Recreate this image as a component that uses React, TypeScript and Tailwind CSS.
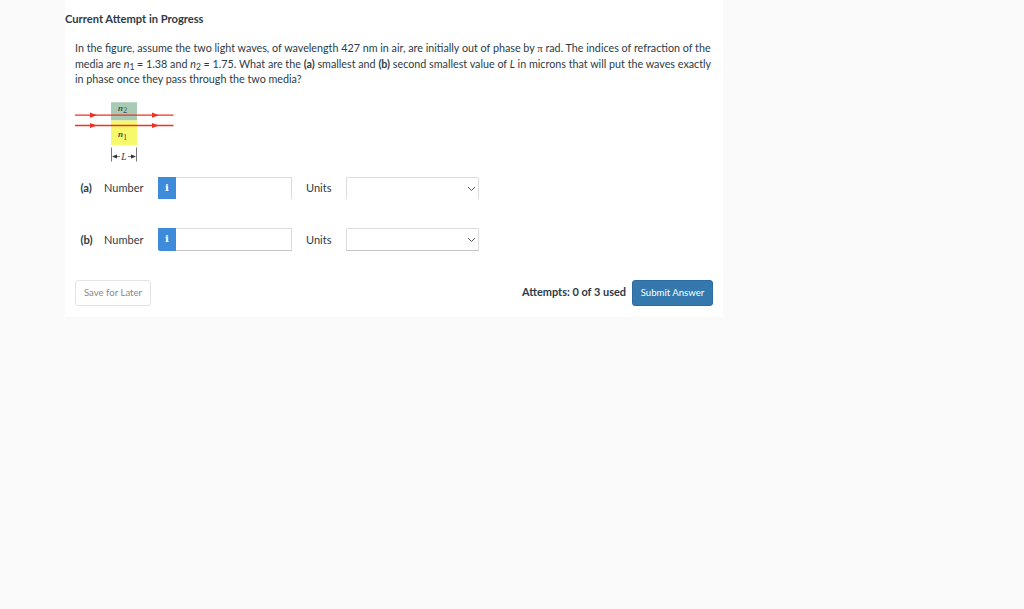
import { useState } from 'react';

interface AnswerRowProps {
  part: string;
  open?: boolean;
}

function LightWaveFigure() {
  return (
    <svg width="110" height="66" viewBox="0 0 110 66" className="block">
      <rect x="36" y="2.2" width="26" height="18.3" fill="#a9cbb5" />
      <rect x="36" y="20.5" width="26" height="24.8" fill="#f8f86c" />
      <g stroke="#ee3124" strokeWidth="1.3">
        <line x1="0" y1="15.2" x2="98.5" y2="15.2" />
        <line x1="0" y1="25.5" x2="98.5" y2="25.5" />
      </g>
      <g fill="#ee3124">
        <path d="M15 12.6 L22 15.2 L15 17.8 Z" />
        <path d="M77 12.6 L84 15.2 L77 17.8 Z" />
        <path d="M15 22.9 L22 25.5 L15 28.1 Z" />
        <path d="M77 22.9 L84 25.5 L77 28.1 Z" />
      </g>
      <g fill="#4b5148" fontFamily="'Liberation Serif', serif">
        <text x="43" y="10.6" fontSize="9" fontStyle="italic" fontWeight="bold">n</text>
        <text x="48" y="12.8" fontSize="8.5">2</text>
        <text x="43" y="37" fontSize="9" fontStyle="italic" fontWeight="bold">n</text>
        <text x="48" y="39.6" fontSize="8.5">1</text>
      </g>
      <g stroke="#555" strokeWidth="0.8">
        <line x1="36.5" y1="47.5" x2="36.5" y2="61.5" />
        <line x1="61.5" y1="47.5" x2="61.5" y2="61.5" />
        <line x1="38" y1="56.6" x2="45" y2="56.6" />
        <line x1="53" y1="56.6" x2="60" y2="56.6" />
      </g>
      <path d="M37 56.6 L42 54.6 V58.6 Z" fill="#333" />
      <path d="M61 56.6 L56 54.6 V58.6 Z" fill="#333" />
      <text x="46.3" y="59.8" fontSize="9.5" fontStyle="italic" fill="#333" fontFamily="'Liberation Serif', serif">L</text>
    </svg>
  );
}

function AnswerRow({ part, open }: AnswerRowProps) {
  const [value, setValue] = useState('');
  const edge = open ? 'h-[22px] border-b-0' : 'h-[23px] border-b-[#c4c4c4]';

  return (
    <div className={`flex h-[23px] items-start pl-[5.5px] ${open ? 'leading-[22px]' : 'leading-[23px]'}`}>
      <span className="w-[23.5px] text-[11.2px] font-bold">{part}</span>
      <span className="w-[54px]">Number</span>
      <span className={`w-[18px] bg-[#3f8bdb] text-center text-[10px] font-bold leading-[21px] text-white ${open ? 'h-[22px]' : 'h-[23px] rounded-bl-xs'}`}>
        <span className="font-['DejaVu_Serif',serif]">i</span>
      </span>
      <input
        value={value}
        onChange={(e) => setValue(e.target.value)}
        className={`w-[116px] border border-l-0 border-[#dcdcdc] bg-white px-2 outline-none ${edge}`}
      />
      <span className="ml-[14px] w-10">Units</span>
      <div className={`flex w-[133px] items-center justify-end rounded-t-xs border border-[#dcdcdc] bg-white pr-[2px] ${edge}`}>
        <svg width="9" height="6" viewBox="0 0 9 6" fill="none" stroke="#555" strokeWidth="1">
          <path d="M1 1 L4.5 4.5 L8 1" />
        </svg>
      </div>
    </div>
  );
}

export default function App() {
  return (
    <div className="min-h-screen bg-[#fafafa] pl-[65px] font-[Lato,sans-serif] text-[11px] text-[#2d3b45]">
      <main className="h-[317px] w-[658px] bg-white pt-[11px]">
        <h1 className="h-[29px] text-[11.15px] font-bold leading-[15px]">Current Attempt in Progress</h1>
        <div className="pl-[10px]">
          <div className="h-[60px] whitespace-nowrap text-[10.76px] leading-[15.2px]">
            <p>
              In the figure, assume the two light waves, of wavelength 427 nm in air, are initially out of phase by{' '}
              <span className="font-['Liberation_Serif',serif]">π</span> rad. The indices of refraction of the
            </p>
            <p>
              media are <i>n</i><sub className="text-[8.5px]">1</sub> = 1.38 and <i>n</i><sub className="text-[8.5px]">2</sub> = 1.75. What are the <b>(a)</b> smallest and{' '}
              <b>(b)</b> second smallest value of <i>L</i> in microns that will put the waves exactly
            </p>
            <p>in phase once they pass through the two media?</p>
          </div>
          <div className="h-[77px]">
            <LightWaveFigure />
          </div>
          <div className="flex flex-col gap-7">
            <AnswerRow part="(a)" open />
            <AnswerRow part="(b)" />
          </div>
          <div className="mt-[29px] flex h-[26px] items-start pr-[10px]">
            <button className="h-[26px] w-[76px] rounded-[3px] border border-[#e3e3e3] bg-white text-[9.6px] text-[#888]">Save for Later</button>
            <span className="ml-auto mr-[6px] text-[10.95px] font-bold leading-6">Attempts: 0 of 3 used</span>
            <button className="h-[26px] w-[81px] rounded-[3px] border border-[#2c6ca3] bg-[#3478ad] text-[9.6px] text-white">Submit Answer</button>
          </div>
        </div>
      </main>
    </div>
  );
}
